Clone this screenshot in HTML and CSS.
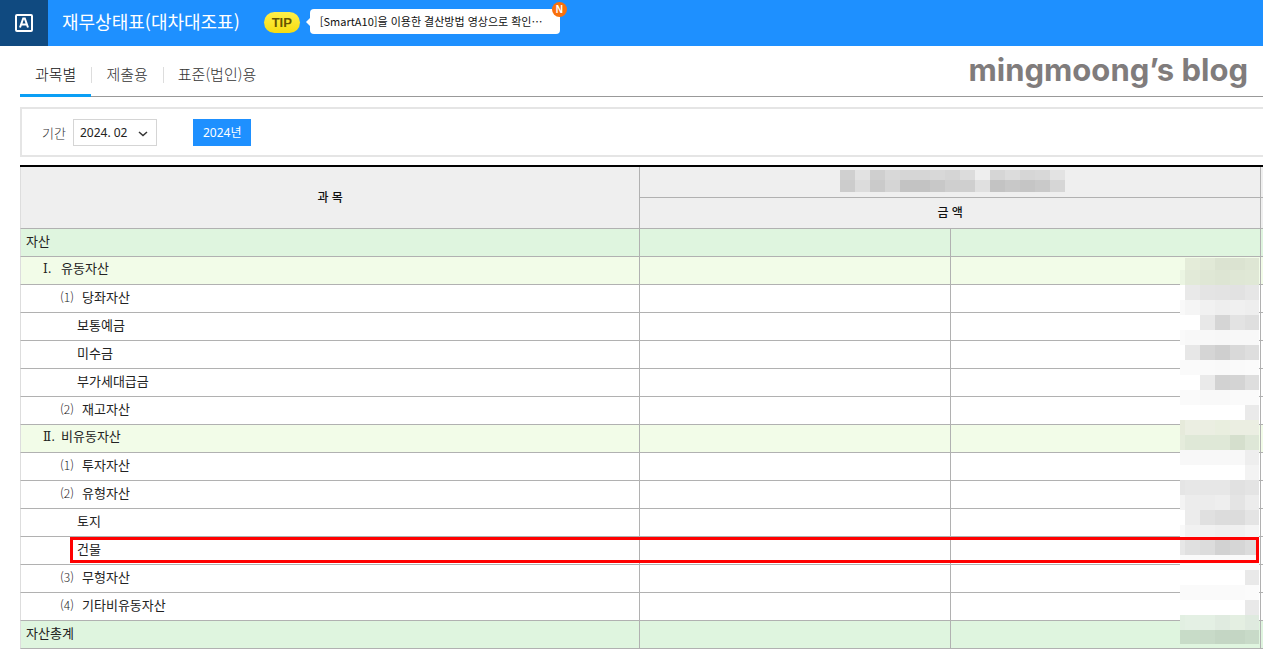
FILE: index.html
```html
<!DOCTYPE html>
<html lang="ko">
<head>
    <meta charset="UTF-8">
    <meta name="viewport" content="width=device-width, initial-scale=1.0">
    <title>재무상태표(대차대조표)</title>
    <link rel="stylesheet" href="styles.css">
</head>
<body>
    <header class="topbar">
        <a class="home" href="#" aria-label="Smart A">
            <svg width="20" height="20" viewBox="0 0 20 20">
                <rect x="2" y="2" width="16" height="16" rx="1" fill="none" stroke="#fff" stroke-width="2"/>
                <path d="M6 14.500L9.200 5.500H10.800L14 14.500M7.400 11.500H12.600" fill="none" stroke="#fff" stroke-width="2"/>
            </svg>
        </a>
        <h1>재무상태표(대차대조표)</h1>
        <span class="tip">TIP</span>
        <a class="tip-bubble" href="#">[SmartA10]을 이용한 결산방법 영상으로 확인⋯<span class="new">N</span></a>
    </header>

    <div class="tab-row">
        <nav class="tabs">
            <a class="active" href="#">과목별</a>
            <a href="#">제출용</a>
            <a href="#">표준(법인)용</a>
        </nav>
        <div class="blog-name">mingmoong’s blog</div>
    </div>

    <form class="filter">
        <label for="period">기간</label>
        <div class="select-box">
            <select id="period">
                <option>2024. 02</option>
            </select>
            <svg width="10" height="6" viewBox="0 0 10 6"><path d="M1 1L5 4.500L9 1" fill="none" stroke="#333" stroke-width="1.500"/></svg>
        </div>
        <button type="button">2024년</button>
    </form>

    <main class="sheet">
        <table>
            <colgroup>
                <col class="col-name">
                <col class="col-amount">
                <col>
                <col class="col-edge">
            </colgroup>
            <thead>
                <tr>
                    <th rowspan="2">과 목</th>
                    <th class="period-title" colspan="2"><svg id="title-mosaic" class="title-mosaic" width="225" height="22" shape-rendering="crispEdges"></svg></th>
                    <th></th>
                </tr>
                <tr>
                    <th colspan="2">금 액</th>
                    <th></th>
                </tr>
            </thead>
            <tbody>
                <tr class="total"><td>자산</td><td></td><td></td><td></td></tr>
                <tr class="group"><td class="lv1"><span class="roman">Ⅰ.</span>유동자산</td><td></td><td></td><td></td></tr>
                <tr><td class="lv2"><span class="no">(1)</span>당좌자산</td><td></td><td></td><td></td></tr>
                <tr><td class="lv3">보통예금</td><td></td><td></td><td></td></tr>
                <tr><td class="lv3">미수금</td><td></td><td></td><td></td></tr>
                <tr><td class="lv3">부가세대급금</td><td></td><td></td><td></td></tr>
                <tr><td class="lv2"><span class="no">(2)</span>재고자산</td><td></td><td></td><td></td></tr>
                <tr class="group"><td class="lv1"><span class="roman">Ⅱ.</span>비유동자산</td><td></td><td></td><td></td></tr>
                <tr><td class="lv2"><span class="no">(1)</span>투자자산</td><td></td><td></td><td></td></tr>
                <tr><td class="lv2"><span class="no">(2)</span>유형자산</td><td></td><td></td><td></td></tr>
                <tr><td class="lv3">토지</td><td></td><td></td><td></td></tr>
                <tr class="marked"><td class="lv3">건물<span class="mark"></span></td><td></td><td></td><td></td></tr>
                <tr><td class="lv2"><span class="no">(3)</span>무형자산</td><td></td><td></td><td></td></tr>
                <tr><td class="lv2"><span class="no">(4)</span>기타비유동자산</td><td></td><td></td><td></td></tr>
                <tr class="total"><td>자산총계</td><td></td><td></td><td></td></tr>
            </tbody>
        </table>
        <svg id="amount-mosaic" class="amount-mosaic" width="79" height="386" shape-rendering="crispEdges"></svg>
    </main>

    <script>
        // Adds one mosaic cell to an svg
        function addCell(svg, x, y, w, h, color) {
            const rect = document.createElementNS('http://www.w3.org/2000/svg', 'rect');
            rect.setAttribute('x', x);
            rect.setAttribute('y', y);
            rect.setAttribute('width', w);
            rect.setAttribute('height', h);
            rect.setAttribute('fill', '#' + color);
            svg.appendChild(rect);
        }

        // Period title in the table head, two rows of cells
        const titleRows = [
            'd0 e2 cf d8 d6 d6 d8 d5 dc ee d6 dc d6 d8 e3',
            'cc dc ca d5 c3 c3 c8 cf cf e0 c3 c8 c5 c9 d6'
        ];
        const titleSvg = document.getElementById('title-mosaic');
        titleRows.forEach((row, r) => {
            row.split(' ').forEach((c, i) => addCell(titleSvg, i * 15, r * 10, 15, r ? 12 : 10, c + c + c));
        });

        // Hidden amounts: a 5px column, then five 15px columns. "-" leaves a cell open
        const amountRows = [
            '- e4ecd9 e1e9d7 dbe3d1 dbe3d1 dee6d4',
            'ebf5e2 e2ead8 dfe7d5 dde5d3 dfe7d5 e0e8d6',
            'ff e9 e4 e3 e2 e6',
            'f9 f5 f1 ee f0 ee',
            'ff ff e8 d5 e3 df',
            'fa f8 f8 f7 f8 f8',
            'ff e7 d5 cf d9 de',
            'fa fa fa f9 fa fb',
            'ff ff ea d2 d4 de',
            'fa fa f9 f9 fa fa',
            'ff ff ff ff ff ea',
            'e6eadb ebeee2 ebeee2 e9eedf ebeee2 ebeee2',
            'e5ecdc dfe8d7 dfe8d7 dfe8d7 d5dfcd dee7d7',
            'f8 f8 f8 f8 f8 ee',
            'ff ff ff ff ff f3',
            'e5 e7 e7 e7 e1 e4',
            'f3 ec ec ee e4 ec',
            'ff ec e0 dc dc e4',
            'f9 f1 f1 ef f0 f4',
            'e7 e0 dc d2 d6 dc',
            'fa fa fa fa fa fa',
            'ff ff ff ff ff e9',
            'fa fa fa fa fa fb',
            'ff ff ff ff ff e9',
            'e2efe2 e4f0e4 e4f0e4 e0ebe0 e4efe2 dfeadf',
            'c8dcc8 c8dcc8 c8dac8 c4d6c4 c4d6c4 c8dac8'
        ];
        const amountSvg = document.getElementById('amount-mosaic');
        amountRows.forEach((row, r) => {
            const y = r ? r * 15 - 3 : 0;
            const h = r ? 15 : 12;
            row.split(' ').forEach((c, i) => {
                if (c === '-') return;
                addCell(amountSvg, i ? i * 15 - 10 : 0, y, i ? 15 : 5, h, c.length === 2 ? c + c + c : c);
            });
        });
    </script>
</body>
</html>
```
FILE: styles.css
```css
* {
    box-sizing: border-box;
}

body {
    margin: 0;
    background: #fff;
    color: #222;
    font-family: 'Noto Sans CJK KR', sans-serif;
    font-size: 13px;
}

a {
    color: inherit;
    text-decoration: none;
}

/* Top bar */
.topbar {
    display: flex;
    align-items: center;
    height: 46px;
    background: #1e90ff;
}

.home {
    display: flex;
    align-items: center;
    justify-content: center;
    width: 48px;
    height: 46px;
    background: #104a80;
}

h1 {
    margin: 0 24px 4px 14px;
    color: #fff;
    font-size: 18px;
    font-weight: 400;
    line-height: 26px;
}

.tip {
    width: 36px;
    margin-bottom: 2px;
    border-radius: 11px;
    background: linear-gradient(#fff04a, #f7dc10);
    color: #665500;
    font-family: 'Liberation Sans', sans-serif;
    font-size: 13px;
    font-weight: 700;
    line-height: 21px;
    text-align: center;
}

.tip-bubble {
    position: relative;
    width: 250px;
    margin: 0 0 4px 10px;
    padding-left: 10px;
    border-radius: 4px;
    background: #fff;
    color: #111;
    font-size: 11px;
    line-height: 25px;
    white-space: nowrap;
}

/* Bubble arrow */
.tip-bubble::before {
    content: '';
    position: absolute;
    top: 9px;
    left: -4px;
    border: 4px solid transparent;
    border-left-width: 0;
    border-right-color: #fff;
}

.new {
    position: absolute;
    top: -7px;
    right: -7px;
    width: 15px;
    border-radius: 50%;
    background: #f8700c;
    color: #fff;
    font-family: 'Liberation Sans', sans-serif;
    font-size: 10px;
    font-weight: 700;
    line-height: 15px;
    text-align: center;
}

/* Tabs */
.tab-row {
    display: flex;
    justify-content: space-between;
    height: 51px;
    margin-left: 20px;
    padding-right: 15px;
    border-bottom: 1px solid #999;
}

.tabs {
    display: flex;
    align-items: flex-end;
}

.tabs a {
    position: relative;
    height: 42px;
    margin-bottom: -1px;
    padding: 0 15px;
    color: #333;
    font-size: 15px;
    font-weight: 300;
    line-height: 38px;
}

.tabs a + a::before {
    content: '';
    position: absolute;
    top: 12px;
    left: 0;
    height: 16px;
    border-left: 1px solid #ddd;
}

.tabs .active {
    border-bottom: 3px solid #0a9ff5;
    color: #111;
}

.blog-name {
    color: #807c7c;
    font-family: Inter, sans-serif;
    font-size: 31px;
    font-weight: 700;
    line-height: 48px;
}

/* Period filter */
.filter {
    display: flex;
    align-items: center;
    height: 50px;
    margin: 10px 0 8px 20px;
    padding-left: 20px;
    border: 2px solid #e5e5e5;
    border-right: 0;
}

.filter label {
    color: #333;
    font-weight: 300;
}

.select-box {
    position: relative;
    width: 84px;
    margin: 0 36px 0 7px;
}

.select-box select {
    display: block;
    width: 100%;
    height: 27px;
    padding: 0 6px;
    border: 1px solid #d5d5d5;
    border-radius: 0;
    background: #fff;
    color: #222;
    font: 12px 'Noto Sans', sans-serif;
    appearance: none;
}

.select-box svg {
    position: absolute;
    top: 12px;
    right: 9px;
    pointer-events: none;
}

.filter button {
    height: 27px;
    padding: 0 10px;
    border: 0;
    background: #1e90ff;
    color: #fff;
    font: 12px 'Noto Sans', 'Noto Sans CJK KR', sans-serif;
}

/* Balance sheet */
.sheet {
    position: relative;
    margin-left: 20px;
    border-top: 2px solid #000;
}

table {
    width: 100%;
    border-spacing: 0;
    table-layout: fixed;
}

.col-name {
    width: 49.9%;
}

.col-amount {
    width: 25%;
}

.col-edge {
    width: 2px;
}

th,
td {
    padding: 0;
    border-right: 1px solid #b1b1b1;
    border-bottom: 1px solid #b1b1b1;
}

th:last-child,
td:last-child {
    border-right: 0;
}

tr > :first-child[rowspan],
td:first-child {
    border-left: 1px solid #ddd;
}

th {
    height: 31px;
    padding-bottom: 2px;
    background: #efefef;
    color: #111;
    font-size: 12px;
    font-weight: 500;
    line-height: 18px;
}

.period-title {
    padding-left: 4px;
}

.title-mosaic {
    display: block;
    margin: 0 auto;
}

td {
    height: 28px;
    padding-bottom: 4px;
    line-height: 20px;
}

td:first-child {
    padding-left: 5px;
}

.total {
    background: #dff5df;
}

.group {
    background: #f2fce8;
}

td.lv1 {
    padding-left: 22px;
}

td.lv2 {
    padding-left: 39px;
}

td.lv3 {
    padding-left: 56px;
}

.roman,
.no {
    display: inline-block;
}

.roman {
    width: 18px;
    font-family: 'DejaVu Serif', serif;
    font-size: 12px;
}

.no {
    width: 22px;
    font-size: 12px;
    font-weight: 300;
}

.amount-mosaic {
    position: absolute;
    top: 91px;
    right: 4px;
}

/* Red frame around the marked account */
.marked {
    position: relative;
}

.mark {
    position: absolute;
    z-index: 2;
    top: 0;
    right: 4px;
    bottom: 2px;
    left: 50px;
    border: 3px solid #f00;
}
```
